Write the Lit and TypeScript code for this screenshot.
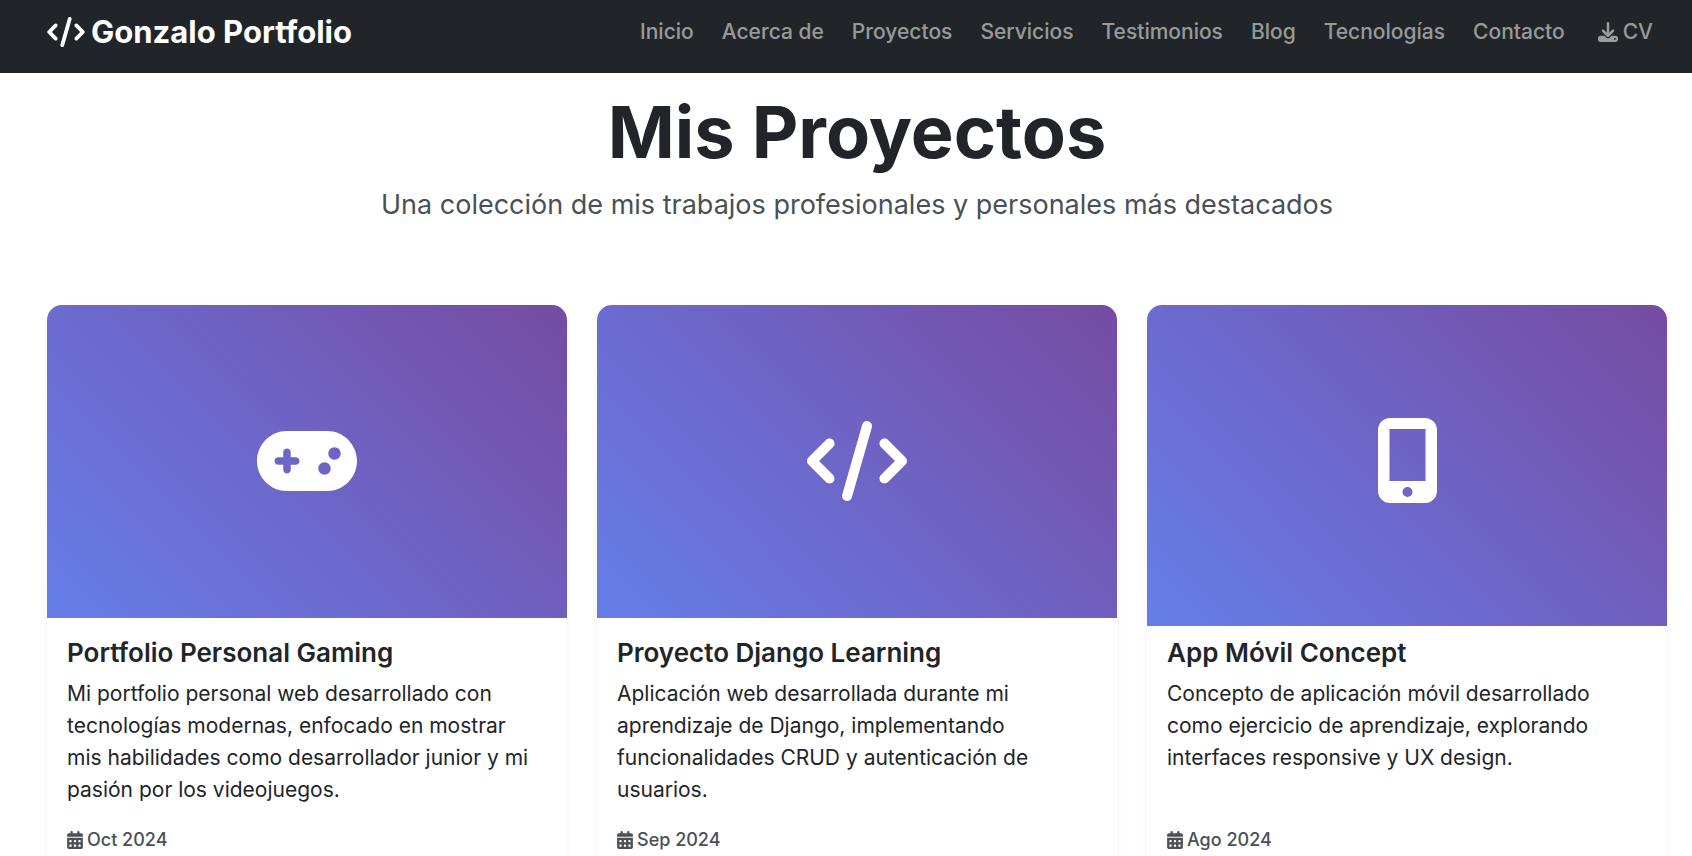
import { LitElement, html, css, svg } from "lit";
import { customElement, property } from "lit/decorators.js";
import { classMap } from "lit/directives/class-map.js";

const codeIcon = svg`<path d="M392.8 1.2c-17-4.9-34.7 5-39.6 22l-128 448c-4.9 17 5 34.7 22 39.6s34.7-5 39.6-22l128-448c4.9-17-5-34.7-22-39.6zm80.6 120.1c-12.5 12.5-12.5 32.8 0 45.3L562.7 256l-89.4 89.4c-12.5 12.5-12.5 32.8 0 45.3s32.8 12.5 45.3 0l112-112c12.5-12.5 12.5-32.8 0-45.3l-112-112c-12.5-12.5-32.8-12.5-45.3 0zm-306.7 0c-12.5-12.5-32.8-12.5-45.3 0l-112 112c-12.5 12.5-12.5 32.8 0 45.3l112 112c12.5 12.5 32.8 12.5 45.3 0s12.5-32.8 0-45.3L77.3 256l89.4-89.4c12.5-12.5 12.5-32.8 0-45.3z"/>`;
const gamepadIcon = svg`<path d="M192 64C86 64 0 150 0 256S86 448 192 448H448c106 0 192-86 192-192s-86-192-192-192H192zM496 168a40 40 0 1 1 0 80 40 40 0 1 1 0-80zM392 304a40 40 0 1 1 80 0 40 40 0 1 1 -80 0zM168 200c0-13.3 10.7-24 24-24s24 10.7 24 24v32h32c13.3 0 24 10.7 24 24s-10.7 24-24 24H216v32c0 13.3-10.7 24-24 24s-24-10.7-24-24V280H136c-13.3 0-24-10.7-24-24s10.7-24 24-24h32V200z"/>`;
const mobileIcon = svg`<path fill-rule="evenodd" d="M12 0H47A12 12 0 0 1 59 12V73A12 12 0 0 1 47 85H12A12 12 0 0 1 0 73V12A12 12 0 0 1 12 0ZM11.500 11V63H47.500V11ZM29.500 69A5 5 0 1 0 29.500 79A5 5 0 1 0 29.500 69Z"/>`;
const downloadIcon = svg`<path d="M288 32c0-17.7-14.3-32-32-32s-32 14.3-32 32V274.7l-73.4-73.4c-12.5-12.5-32.8-12.5-45.3 0s-12.5 32.8 0 45.3l128 128c12.5 12.5 32.8 12.5 45.3 0l128-128c12.5-12.5 12.5-32.8 0-45.3s-32.8-12.5-45.3 0L288 274.7V32zM64 352c-35.3 0-64 28.7-64 64v32c0 35.3 28.7 64 64 64H448c35.3 0 64-28.7 64-64V416c0-35.3-28.7-64-64-64H346.5l-45.3 45.3c-25 25-65.5 25-90.5 0L165.500 352H64zm368 56a24 24 0 1 1 0 48 24 24 0 1 1 0-48z"/>`;
const calendarIcon = svg`<path d="M128 0c17.7 0 32 14.3 32 32V64H288V32c0-17.7 14.3-32 32-32s32 14.3 32 32V64h48c26.5 0 48 21.5 48 48v48H0V112C0 85.5 21.5 64 48 64H96V32c0-17.7 14.3-32 32-32zM0 192H448V464c0 26.5-21.5 48-48 48H48c-26.5 0-48-21.5-48-48V192zm64 80v32c0 8.8 7.2 16 16 16h32c8.8 0 16-7.2 16-16V272c0-8.8-7.2-16-16-16H80c-8.8 0-16 7.2-16 16zm128 0v32c0 8.8 7.2 16 16 16h32c8.8 0 16-7.2 16-16V272c0-8.8-7.2-16-16-16H208c-8.8 0-16 7.2-16 16zm144-16c-8.8 0-16 7.2-16 16v32c0 8.8 7.2 16 16 16h32c8.8 0 16-7.2 16-16V272c0-8.8-7.2-16-16-16H336zM64 400v32c0 8.8 7.2 16 16 16h32c8.8 0 16-7.2 16-16V400c0-8.8-7.2-16-16-16H80c-8.8 0-16 7.2-16 16zm144-16c-8.8 0-16 7.2-16 16v32c0 8.8 7.2 16 16 16h32c8.8 0 16-7.2 16-16V400c0-8.8-7.2-16-16-16H208zm112 16v32c0 8.8 7.2 16 16 16h32c8.8 0 16-7.2 16-16V400c0-8.8-7.2-16-16-16H336c-8.8 0-16 7.2-16 16z"/>`;

interface Project {
  title: string;
  text: string;
  date: string;
  icon: "gamepad" | "code" | "mobile";
  tall?: boolean;
}

const covers = {
  gamepad: html`<svg class="wide" viewBox="0 0 640 512" aria-hidden="true">${gamepadIcon}</svg>`,
  code: html`<svg class="wide" viewBox="0 0 640 512" aria-hidden="true">${codeIcon}</svg>`,
  mobile: html`<svg class="phone" viewBox="0 0 59 85" aria-hidden="true">${mobileIcon}</svg>`,
};

const projects: Project[] = [
  {
    title: "Portfolio Personal Gaming",
    text: "Mi portfolio personal web desarrollado con tecnologías modernas, enfocado en mostrar mis habilidades como desarrollador junior y mi pasión por los videojuegos.",
    date: "Oct 2024",
    icon: "gamepad",
  },
  {
    title: "Proyecto Django Learning",
    text: "Aplicación web desarrollada durante mi aprendizaje de Django, implementando funcionalidades CRUD y autenticación de usuarios.",
    date: "Sep 2024",
    icon: "code",
  },
  {
    title: "App Móvil Concept",
    text: "Concepto de aplicación móvil desarrollado como ejercicio de aprendizaje, explorando interfaces responsive y UX design.",
    date: "Ago 2024",
    icon: "mobile",
    tall: true,
  },
];

const links = ["Inicio", "Acerca de", "Proyectos", "Servicios", "Testimonios", "Blog", "Tecnologías", "Contacto"];

@customElement("site-header")
export class SiteHeader extends LitElement {
  static styles = css`
    :host {
      display: block;
      background: #212529;
    }
    .bar {
      display: flex;
      align-items: center;
      justify-content: space-between;
      gap: 24px;
      padding: 12px 39px 21px 47px;
    }
    a {
      text-decoration: none;
      white-space: nowrap;
    }
    svg {
      fill: currentColor;
      flex: none;
    }
    .brand {
      display: flex;
      align-items: center;
      gap: 6px;
      color: #fff;
      font-size: 31px;
      line-height: 40px;
      font-weight: 700;
    }
    .brand svg {
      width: 38px;
      height: 30px;
    }
    .links {
      display: flex;
      align-items: center;
      gap: 28px;
    }
    .link {
      color: rgba(255, 255, 255, 0.55);
      font-size: 21px;
      line-height: 32px;
      font-weight: 500;
    }
    .cv {
      display: flex;
      align-items: center;
      gap: 5px;
      padding-left: 5px;
    }
    .cv svg {
      width: 20px;
      height: 20px;
    }
  `;

  render() {
    return html`
      <header class="bar">
        <a class="brand" href="#inicio">
          <svg viewBox="0 0 640 512" aria-hidden="true">${codeIcon}</svg>
          <span>Gonzalo Portfolio</span>
        </a>
        <nav class="links">
          ${links.map((label) => html`<a class="link" href="#">${label}</a>`)}
          <a class="link cv" href="#cv">
            <svg viewBox="0 0 512 512" aria-hidden="true">${downloadIcon}</svg>
            <span>CV</span>
          </a>
        </nav>
      </header>
    `;
  }
}

@customElement("project-card")
export class ProjectCard extends LitElement {
  @property({ attribute: false }) project!: Project;

  static styles = css`
    :host {
      display: flex;
      flex-direction: column;
      border-radius: 15px;
      background: #fff;
      box-shadow: 0 2px 6px rgba(0, 0, 0, 0.06);
      overflow: hidden;
    }
    .cover {
      display: flex;
      align-items: center;
      justify-content: center;
      height: 311px;
      padding-bottom: 2px;
      background: linear-gradient(45deg, #667eea 0%, #764ba2 100%);
    }
    .cover.tall {
      padding-bottom: 10px;
      margin-bottom: -8px;
    }
    .cover svg {
      fill: #fff;
    }
    .wide {
      width: 100px;
      height: 80px;
    }
    .phone {
      width: 59px;
      height: 85px;
    }
    .body {
      flex: 1;
      display: flex;
      flex-direction: column;
      padding: 20px 24px 20px 20px;
    }
    h2 {
      margin: 0 0 10px;
      font-size: 26px;
      line-height: 30px;
      font-weight: 600;
    }
    p {
      margin: 0 0 20px;
      font-size: 21px;
      line-height: 32px;
    }
    .date {
      display: flex;
      align-items: center;
      gap: 4px;
      margin-top: auto;
      color: #495057;
      font-size: 18px;
      line-height: 28px;
      font-weight: 500;
    }
    .date svg {
      width: 16px;
      height: 18px;
      fill: currentColor;
    }
  `;

  render() {
    const { title, text, date, icon, tall } = this.project;
    return html`
      <div class=${classMap({ cover: true, tall: !!tall })}>${covers[icon]}</div>
      <div class="body">
        <h2>${title}</h2>
        <p>${text}</p>
        <div class="date">
          <svg viewBox="0 0 448 512" aria-hidden="true">${calendarIcon}</svg>
          <time>${date}</time>
        </div>
      </div>
    `;
  }
}

@customElement("app-root")
export class AppRoot extends LitElement {
  static styles = css`
    :host {
      display: block;
      min-height: 100vh;
      background: #fff;
      color: #212529;
      font-family: Inter, "Open Sans", sans-serif;
    }
    main {
      padding: 18px 25px 48px 47px;
    }
    .intro {
      text-align: center;
      margin-bottom: 80px;
    }
    h1 {
      margin: 0 0 12px;
      font-size: 72px;
      line-height: 82px;
      font-weight: 700;
    }
    .lead {
      margin: 0;
      color: #495057;
      font-size: 27px;
      line-height: 40px;
      font-weight: 400;
    }
    .grid {
      display: grid;
      grid-template-columns: repeat(3, minmax(0, 1fr));
      gap: 30px;
    }
  `;

  render() {
    return html`
      <site-header></site-header>
      <main>
        <section class="intro">
          <h1>Mis Proyectos</h1>
          <p class="lead">Una colección de mis trabajos profesionales y personales más destacados</p>
        </section>
        <section class="grid">
          ${projects.map((p) => html`<project-card .project=${p}></project-card>`)}
        </section>
      </main>
    `;
  }
}
